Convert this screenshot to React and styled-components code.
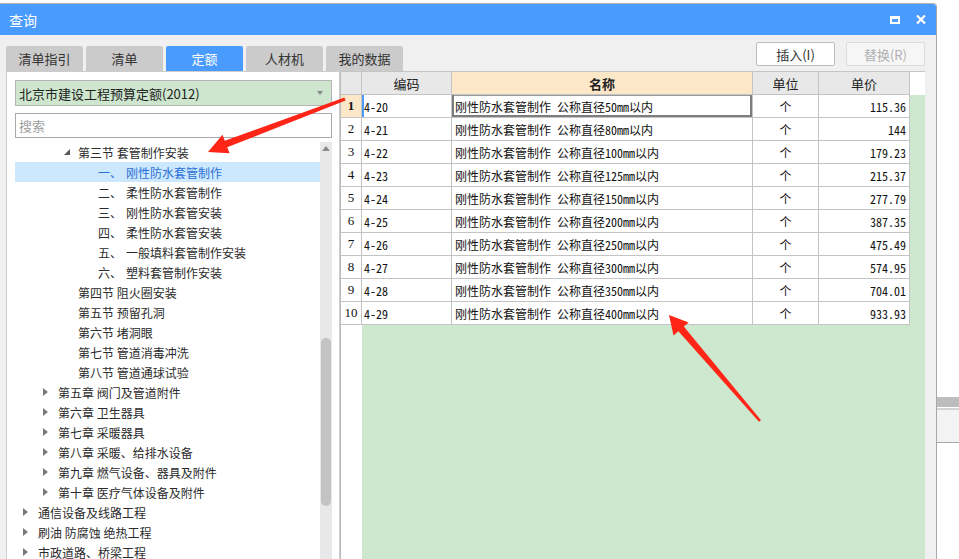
import React from "react";
import styled, { createGlobalStyle, css } from "styled-components";

const GlobalStyle = createGlobalStyle`
  html, body { margin: 0; padding: 0; background: #fff; }
  body { font-family: "Noto Sans CJK SC", sans-serif; color: #333; }
  * { box-sizing: border-box; }
`;

const MONO = `"Noto Sans Mono CJK SC", "Liberation Mono", "Noto Sans CJK SC", monospace`;

const Screen = styled.div`
  position: relative;
  width: 959px;
  height: 559px;
  overflow: hidden;
  display: flex;
  align-items: flex-start;
  background: #fff;
`;

const Window = styled.div`
  width: 937px;
  height: 600px;
  margin-top: 3px;
  flex-shrink: 0;
  display: flex;
  flex-direction: column;
  border-top: 1px solid #b4b4b4;
  border-right: 1px solid #a8a8a8;
  border-top-right-radius: 4px;
  overflow: hidden;
`;

const TitleBar = styled.div`
  height: 31px;
  background: #4a9bfe;
  display: flex;
  align-items: center;
  padding: 0 10px 0 9px;
  color: #fff;
  font-size: 14px;
`;

const TitleButtons = styled.div`
  margin-left: auto;
  display: flex;
  align-items: center;
  gap: 16px;
`;

const Body = styled.div`
  flex: 1;
  background: #f0f0f0;
  padding: 0 11px 0 6px;
  display: flex;
  flex-direction: column;
`;

const ToolRow = styled.div`
  height: 36px;
  display: flex;
  align-items: flex-end;
`;

const Tab = styled.div`
  width: 77px;
  height: 25px;
  margin-right: 3px;
  border-radius: 2px 2px 0 0;
  display: flex;
  align-items: center;
  justify-content: center;
  font-size: 13px;
  background: ${(p) => (p.$active ? "#4a9bfe" : "#cbcbcb")};
  color: ${(p) => (p.$active ? "#fff" : "#333")};
`;

const Buttons = styled.div`
  margin-left: auto;
  margin-bottom: 5px;
  display: flex;
  gap: 11px;
`;

const Button = styled.div`
  width: 79px;
  height: 24px;
  border-radius: 2px;
  display: flex;
  align-items: center;
  justify-content: center;
  font-size: 13px;
  background: ${(p) => (p.$disabled ? "#f6f6f6" : "#fff")};
  border: 1px solid ${(p) => (p.$disabled ? "#dcdcdc" : "#bdbdbd")};
  color: ${(p) => (p.$disabled ? "#b0b0b0" : "#333")};
`;

const Content = styled.div`
  flex: 1;
  display: flex;
  min-height: 0;
`;

const LeftPanel = styled.div`
  width: 334px;
  background: #fff;
  border: 1px solid #cdcdcd;
  padding: 8px 7px 0 8px;
  display: flex;
  flex-direction: column;
`;

const Select = styled.div`
  height: 26px;
  background: #cde6cd;
  border: 1px solid #b5b5b5;
  display: flex;
  align-items: center;
  padding: 0 8px 0 3px;
  font-size: 13px;
  color: #222;
`;

const Caret = styled.span`
  margin-left: auto;
  width: 0;
  height: 0;
  border-left: 3px solid transparent;
  border-right: 3px solid transparent;
  border-top: 4px solid #888;
`;

const Search = styled.div`
  height: 25px;
  margin-top: 7px;
  border: 1px solid #a9a9a9;
  display: flex;
  align-items: center;
  padding-left: 3px;
  font-size: 13px;
  color: #a0a0a0;
`;

const TreeBox = styled.div`
  flex: 1;
  margin-top: 4px;
  display: flex;
  min-height: 0;
`;

const TreeList = styled.div`
  flex: 1;
  overflow: hidden;
`;

const TreeRow = styled.div`
  height: 20px;
  display: flex;
  align-items: center;
  font-size: 12px;
  padding-left: ${(p) => 8 + p.$level * 20}px;
  white-space: nowrap;
  color: #2b2b2b;
  ${(p) =>
    p.$selected &&
    css`
      background: #cce8ff;
      color: #2a6fd4;
    `}
`;

const Toggle = styled.span`
  width: 15px;
  flex-shrink: 0;
  display: flex;
  align-items: center;
`;

const Expanded = styled.span`
  width: 0;
  height: 0;
  margin-left: 1px;
  border-left: 6px solid transparent;
  border-bottom: 6px solid #595959;
`;

const Collapsed = styled.span`
  width: 0;
  height: 0;
  border-top: 4px solid transparent;
  border-bottom: 4px solid transparent;
  border-left: 5px solid #7a7a7a;
`;

const Num = styled.span`
  display: inline-block;
  width: 28px;
`;

const Scrollbar = styled.div`
  width: 12px;
  background: #e8e8e8;
  display: flex;
  flex-direction: column;
  align-items: center;
`;

const UpArrow = styled.span`
  margin-top: 4px;
  width: 0;
  height: 0;
  border-left: 4px solid transparent;
  border-right: 4px solid transparent;
  border-bottom: 5px solid #8a8a8a;
`;

const Thumb = styled.div`
  margin-top: 187px;
  width: 10px;
  height: 168px;
  border-radius: 5px;
  background: #c3c3c3;
`;

const RightPanel = styled.div`
  width: 585px;
  background: #cde8cf;
  border-top: 1px solid #c4c4c4;
  border-left: 1px solid #bcbcbc;
  display: flex;
  flex-direction: column;
`;

const GridRow = styled.div`
  display: grid;
  grid-template-columns: 21px 90px 301px 66px 91px 1fr;
  height: 23px;
`;

const Cell = styled.div`
  border-right: 1px solid #c4c4c4;
  border-bottom: 1px solid #c4c4c4;
  background: #fff;
  display: flex;
  align-items: center;
  font-size: 12px;
  color: #111;
  white-space: nowrap;
  overflow: hidden;
  justify-content: ${(p) =>
    p.$align === "center" ? "center" : p.$align === "right" ? "flex-end" : "flex-start"};
  padding: ${(p) => (p.$align === "right" ? "0 3px 0 0" : p.$align === "center" ? "0" : "0 0 0 3px")};
  font-family: ${(p) => (p.$mono ? MONO : "inherit")};
`;

const HeadCell = styled(Cell)`
  background: ${(p) => (p.$accent ? "#fde7c9" : "#e8e8e8")};
  font-weight: ${(p) => (p.$accent ? 700 : 400)};
  font-size: 13px;
  color: #222;
`;

const RowNum = styled(Cell)`
  background: ${(p) => (p.$current ? "#fde7c9" : "#fff")};
  font-weight: ${(p) => (p.$current ? 700 : 400)};
  font-family: "Liberation Serif", serif;
  font-size: 13px;
`;

const CodeCell = styled(Cell)`
  padding-left: 2px;
  ${(p) => p.$current && css`box-shadow: inset 2px 0 0 #4a9bfe;`}
`;

const NameCell = styled(Cell)`
  ${(p) =>
    p.$current &&
    css`
      box-shadow: inset 2px 0 0 #7d7d7d, inset -2px -2px 0 #7d7d7d, inset 0 1px 0 #9a9a9a;
    `}
`;

const Blank = styled.div`
  background: ${(p) => (p.$white ? "#fff" : "transparent")};
`;

const Filler = styled.div`
  flex: 1;
  display: flex;
`;

const NumColumnFill = styled.div`
  width: 21px;
  background: #fff;
`;

const SideStrip = styled.div`
  flex: 1;
  height: 559px;
  display: flex;
  flex-direction: column;
  background: #fff;
`;

const StripPart = styled.div`
  height: ${(p) => p.$h}px;
  background: ${(p) => p.$bg};
  border-bottom: ${(p) => (p.$line ? "1px solid #a9a9a9" : "none")};
`;

const Overlay = styled.svg`
  position: absolute;
  left: 0;
  top: 0;
  pointer-events: none;
`;

const tree = [
  { level: 2, toggle: "open", text: "第三节 套管制作安装" },
  { level: 3, num: "一、", text: "刚性防水套管制作", selected: true },
  { level: 3, num: "二、", text: "柔性防水套管制作" },
  { level: 3, num: "三、", text: "刚性防水套管安装" },
  { level: 3, num: "四、", text: "柔性防水套管安装" },
  { level: 3, num: "五、", text: "一般填料套管制作安装" },
  { level: 3, num: "六、", text: "塑料套管制作安装" },
  { level: 2, text: "第四节 阻火圈安装" },
  { level: 2, text: "第五节 预留孔洞" },
  { level: 2, text: "第六节 堵洞眼" },
  { level: 2, text: "第七节 管道消毒冲洗" },
  { level: 2, text: "第八节 管道通球试验" },
  { level: 1, toggle: "closed", text: "第五章 阀门及管道附件" },
  { level: 1, toggle: "closed", text: "第六章 卫生器具" },
  { level: 1, toggle: "closed", text: "第七章 采暖器具" },
  { level: 1, toggle: "closed", text: "第八章 采暖、给排水设备" },
  { level: 1, toggle: "closed", text: "第九章 燃气设备、器具及附件" },
  { level: 1, toggle: "closed", text: "第十章 医疗气体设备及附件" },
  { level: 0, toggle: "closed", text: "通信设备及线路工程" },
  { level: 0, toggle: "closed", text: "刷油 防腐蚀 绝热工程" },
  { level: 0, toggle: "closed", text: "市政道路、桥梁工程" },
];

const diameters = [50, 80, 100, 125, 150, 200, 250, 300, 350, 400];
const prices = ["115.36", "144", "179.23", "215.37", "277.79", "387.35", "475.49", "574.95", "704.01", "933.93"];

const rows = diameters.map((d, i) => ({
  n: i + 1,
  code: `4-${20 + i}`,
  name: `刚性防水套管制作 公称直径${d}mm以内`,
  unit: "个",
  price: prices[i],
}));

const tabs = ["清单指引", "清单", "定额", "人材机", "我的数据"];

const App = () => {
  return (
    <>
      <GlobalStyle />
      <Screen>
        <Window>
          <TitleBar>
            查询
            <TitleButtons>
              <svg width="10" height="8" viewBox="0 0 10 8">
                <rect x="1" y="1.5" width="8" height="5.5" fill="none" stroke="#fff" strokeWidth="2" />
                <rect x="0" y="0" width="10" height="3" fill="#fff" />
              </svg>
              <svg width="10" height="9" viewBox="0 0 10 9">
                <path d="M1 0.5 L9 8.5 M9 0.5 L1 8.5" stroke="#fff" strokeWidth="2.2" />
              </svg>
            </TitleButtons>
          </TitleBar>
          <Body>
            <ToolRow>
              {tabs.map((t) => (
                <Tab key={t} $active={t === "定额"}>
                  {t}
                </Tab>
              ))}
              <Buttons>
                <Button>插入(I)</Button>
                <Button $disabled>替换(R)</Button>
              </Buttons>
            </ToolRow>
            <Content>
              <LeftPanel>
                <Select>
                  北京市建设工程预算定额(2012)
                  <Caret />
                </Select>
                <Search>搜索</Search>
                <TreeBox>
                  <TreeList>
                    {tree.map((item) => (
                      <TreeRow key={item.text} $level={item.level} $selected={item.selected}>
                        <Toggle>
                          {item.toggle === "open" && <Expanded />}
                          {item.toggle === "closed" && <Collapsed />}
                        </Toggle>
                        {item.num && <Num>{item.num}</Num>}
                        {item.text}
                      </TreeRow>
                    ))}
                  </TreeList>
                  <Scrollbar>
                    <UpArrow />
                    <Thumb />
                  </Scrollbar>
                </TreeBox>
              </LeftPanel>
              <RightPanel>
                <GridRow>
                  <HeadCell />
                  <HeadCell $align="center">编码</HeadCell>
                  <HeadCell $align="center" $accent>名称</HeadCell>
                  <HeadCell $align="center">单位</HeadCell>
                  <HeadCell $align="center">单价</HeadCell>
                  <Blank $white />
                </GridRow>
                {rows.map((r) => (
                  <GridRow key={r.n}>
                    <RowNum $align="center" $current={r.n === 1}>{r.n}</RowNum>
                    <CodeCell $mono $current={r.n === 1}>{r.code}</CodeCell>
                    <NameCell $mono $current={r.n === 1}>{r.name}</NameCell>
                    <Cell $align="center" $mono>{r.unit}</Cell>
                    <Cell $align="right" $mono>{r.price}</Cell>
                    <Blank />
                  </GridRow>
                ))}
                <Filler>
                  <NumColumnFill />
                </Filler>
              </RightPanel>
            </Content>
          </Body>
        </Window>
        <SideStrip>
          <StripPart $h={397} $bg="#fff" />
          <StripPart $h={10} $bg="#bdbdbd" />
          <StripPart $h={1} $bg="#fff" />
          <StripPart $h={2} $bg="#d4d4d4" />
          <StripPart $h={33} $bg="#f3f3f3" $line />
        </SideStrip>
        <Overlay width="959" height="559" viewBox="0 0 959 559">
          <polygon
            fill="#ff2617"
            points="345.6,100.6 227.2,147.3 229.6,153.3 208,152 222.5,134.7 224.8,140.7 344.4,97.4"
          />
          <polygon
            fill="#ff2617"
            points="761,420.2 683.8,326.6 688.7,322.4 669,315 673.5,335.4 678.4,331.2 759,421.8"
          />
        </Overlay>
      </Screen>
    </>
  );
};

export default App;
